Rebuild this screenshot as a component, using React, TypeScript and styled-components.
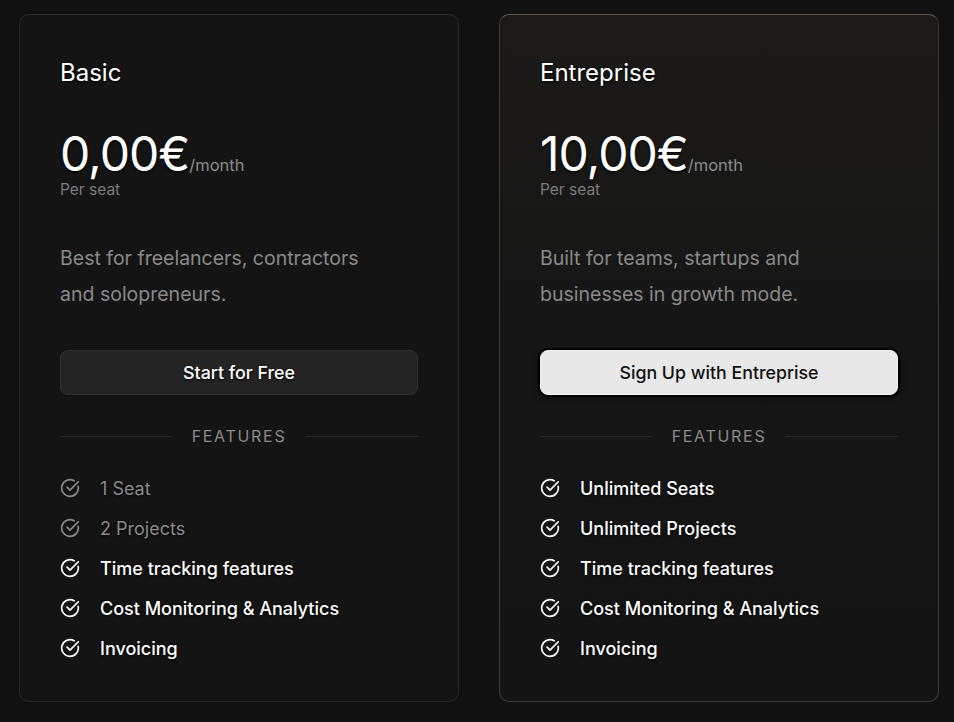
import React from 'react';
import styled, { createGlobalStyle } from 'styled-components';

const GlobalStyle = createGlobalStyle`
  html, body {
    margin: 0;
    padding: 0;
    background: #111111;
  }
  body {
    font-family: Inter, "Noto Sans", sans-serif;
    color: #ffffff;
  }
`;

const Page = styled.div`
  display: flex;
  gap: 40px;
  padding: 14px 15px 20px 19px;
  width: 954px;
  height: 722px;
  box-sizing: border-box;
  background: #111111;
`;

const Card = styled.div<{ $highlight?: boolean }>`
  width: 440px;
  height: 688px;
  box-sizing: border-box;
  padding: 43px 40px 0 40px;
  display: flex;
  flex-direction: column;
  border-radius: 10px;
  border: 1px solid ${(p) => (p.$highlight ? '#3d3a35' : '#282828')};
  border-top-color: ${(p) => (p.$highlight ? '#5a554c' : '#2c2c2c')};
  background: ${(p) =>
    p.$highlight
      ? 'linear-gradient(180deg, #1b1a18 0%, #161616 45%, #141414 100%)'
      : '#141414'};
`;

const PlanName = styled.h3`
  margin: 0;
  font-size: 24px;
  font-weight: 400;
  line-height: 30px;
  text-shadow: 0 1px 3px #000;
`;

const PriceRow = styled.div`
  margin-top: 46px;
  display: flex;
  align-items: baseline;
  height: 40px;
`;

const Amount = styled.span`
  font-size: 48px;
  font-weight: 400;
  line-height: 40px;
  letter-spacing: -1px;
  text-shadow: 0 1px 3px #000;
`;

const Period = styled.span`
  font-size: 16.5px;
  line-height: 20px;
  color: #8c8c8c;
`;

const PerSeat = styled.div`
  margin-top: 6px;
  font-size: 15.5px;
  line-height: 20px;
  color: #7b7b7b;
`;

const Description = styled.p`
  margin: 40px 0 0;
  font-size: 19.5px;
  line-height: 36px;
  color: #8a8a8a;
  max-width: 325px;
`;

const Action = styled.button<{ $primary?: boolean }>`
  margin-top: 38px;
  width: 358px;
  height: 45px;
  border-radius: 8px;
  font-family: inherit;
  font-size: 17.8px;
  font-weight: 500;
  cursor: pointer;
  border: 1px solid ${(p) => (p.$primary ? '#f0f0f0' : '#303030')};
  background: ${(p) => (p.$primary ? '#e8e8e8' : '#242424')};
  color: ${(p) => (p.$primary ? '#111111' : '#ffffff')};
  box-shadow: ${(p) => (p.$primary ? '0 0 0 2px #000, 0 2px 6px #000' : 'none')};
  text-shadow: ${(p) => (p.$primary ? 'none' : '0 1px 3px #000')};
`;

const Divider = styled.div`
  margin-top: 31px;
  width: 358px;
  display: flex;
  align-items: center;
  gap: 20px;

  &::before,
  &::after {
    content: '';
    flex: 1;
    height: 1px;
    background: #2a2a2a;
  }
`;

const DividerLabel = styled.span`
  font-size: 16px;
  letter-spacing: 1.7px;
  color: #8a8a8a;
`;

const FeatureList = styled.ul`
  list-style: none;
  margin: 30px 0 0;
  padding: 0;
  display: flex;
  flex-direction: column;
  gap: 16px;
`;

const Feature = styled.li<{ $muted?: boolean }>`
  display: flex;
  align-items: center;
  gap: 20px;
  height: 24px;
  font-size: 18px;
  font-weight: ${(p) => (p.$muted ? 400 : 500)};
  color: ${(p) => (p.$muted ? '#8a8a8a' : '#ffffff')};
  text-shadow: 0 1px 3px #000;
`;

const CheckIcon: React.FC = () => (
  <svg width="20" height="20" viewBox="0 0 24 24" fill="none" stroke="currentColor" strokeWidth="2" strokeLinecap="round" strokeLinejoin="round">
    <path d="M21.8 10A10 10 0 1 1 17 3.34" />
    <path d="m8.5 11 3.5 3.5L22 4.5" />
  </svg>
);

interface PlanProps {
  name: string;
  amount: string;
  description: string;
  action: string;
  highlight?: boolean;
  features: { label: string; muted?: boolean }[];
}

const Plan: React.FC<PlanProps> = ({ name, amount, description, action, highlight, features }) => (
  <Card $highlight={highlight}>
    <PlanName>{name}</PlanName>
    <PriceRow>
      <Amount>{amount}</Amount>
      <Period>/month</Period>
    </PriceRow>
    <PerSeat>Per seat</PerSeat>
    <Description>{description}</Description>
    <Action $primary={highlight}>{action}</Action>
    <Divider>
      <DividerLabel>FEATURES</DividerLabel>
    </Divider>
    <FeatureList>
      {features.map((f) => (
        <Feature key={f.label} $muted={f.muted}>
          <CheckIcon />
          {f.label}
        </Feature>
      ))}
    </FeatureList>
  </Card>
);

const common = [
  { label: 'Time tracking features' },
  { label: 'Cost Monitoring & Analytics' },
  { label: 'Invoicing' },
];

export default function App() {
  return (
    <>
      <GlobalStyle />
      <Page>
        <Plan
          name="Basic"
          amount="0,00€"
          description="Best for freelancers, contractors and solopreneurs."
          action="Start for Free"
          features={[{ label: '1 Seat', muted: true }, { label: '2 Projects', muted: true }, ...common]}
        />
        <Plan
          highlight
          name="Entreprise"
          amount="10,00€"
          description="Built for teams, startups and businesses in growth mode."
          action="Sign Up with Entreprise"
          features={[{ label: 'Unlimited Seats' }, { label: 'Unlimited Projects' }, ...common]}
        />
      </Page>
    </>
  );
}
